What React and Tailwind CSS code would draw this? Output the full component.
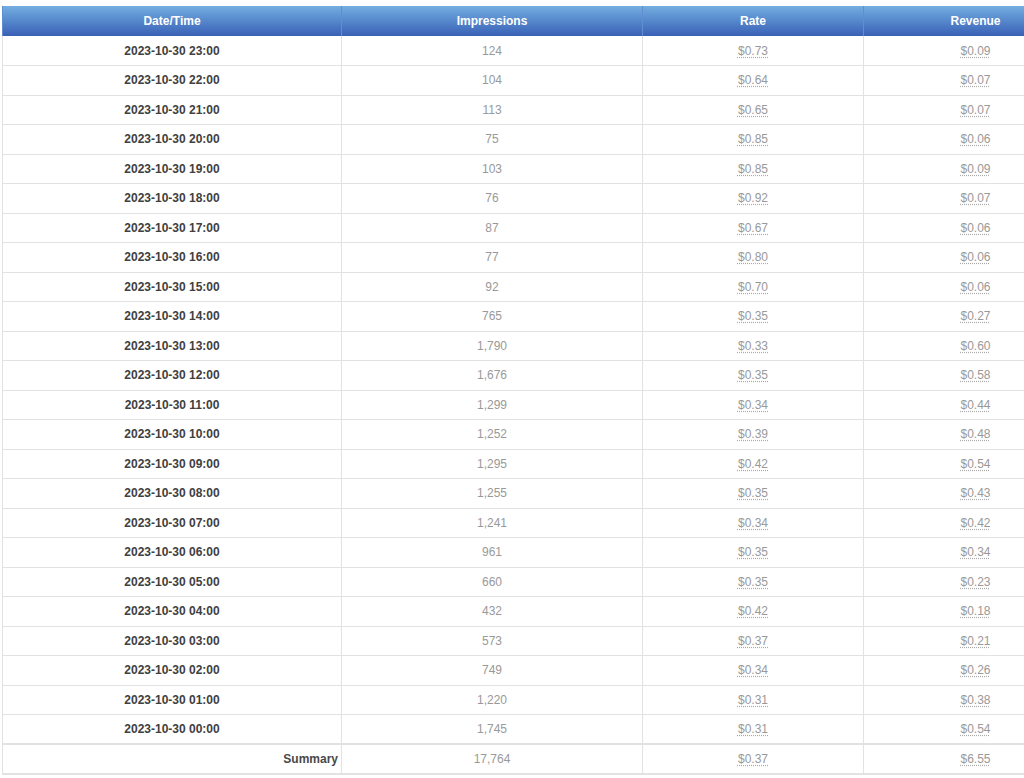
const rows = [
  ['2023-10-30 23:00', '124', '$0.73', '$0.09'],
  ['2023-10-30 22:00', '104', '$0.64', '$0.07'],
  ['2023-10-30 21:00', '113', '$0.65', '$0.07'],
  ['2023-10-30 20:00', '75', '$0.85', '$0.06'],
  ['2023-10-30 19:00', '103', '$0.85', '$0.09'],
  ['2023-10-30 18:00', '76', '$0.92', '$0.07'],
  ['2023-10-30 17:00', '87', '$0.67', '$0.06'],
  ['2023-10-30 16:00', '77', '$0.80', '$0.06'],
  ['2023-10-30 15:00', '92', '$0.70', '$0.06'],
  ['2023-10-30 14:00', '765', '$0.35', '$0.27'],
  ['2023-10-30 13:00', '1,790', '$0.33', '$0.60'],
  ['2023-10-30 12:00', '1,676', '$0.35', '$0.58'],
  ['2023-10-30 11:00', '1,299', '$0.34', '$0.44'],
  ['2023-10-30 10:00', '1,252', '$0.39', '$0.48'],
  ['2023-10-30 09:00', '1,295', '$0.42', '$0.54'],
  ['2023-10-30 08:00', '1,255', '$0.35', '$0.43'],
  ['2023-10-30 07:00', '1,241', '$0.34', '$0.42'],
  ['2023-10-30 06:00', '961', '$0.35', '$0.34'],
  ['2023-10-30 05:00', '660', '$0.35', '$0.23'],
  ['2023-10-30 04:00', '432', '$0.42', '$0.18'],
  ['2023-10-30 03:00', '573', '$0.37', '$0.21'],
  ['2023-10-30 02:00', '749', '$0.34', '$0.26'],
  ['2023-10-30 01:00', '1,220', '$0.31', '$0.38'],
  ['2023-10-30 00:00', '1,745', '$0.31', '$0.54'],
]

function Money({ value }) {
  return (
    <span className="underline decoration-dotted decoration-[#aaa] underline-offset-2">{value}</span>
  )
}

export default function App() {
  return (
    <div className="w-[1024px] h-[778px] overflow-hidden bg-white pt-[6px] pl-[2px] font-['Liberation_Sans',Arial,sans-serif] text-[12px]">
      <table className="w-[1085px] border-collapse table-fixed">
        <colgroup>
          <col className="w-[339px]" />
          <col className="w-[301px]" />
          <col className="w-[221px]" />
          <col className="w-[224px]" />
        </colgroup>
        <thead>
          <tr className="h-[30px] bg-gradient-to-b from-[#74aee0] to-[#3a60b6]">
            {['Date/Time', 'Impressions', 'Rate', 'Revenue'].map((h) => (
              <th key={h} className="border-x border-[#5f8fd0] text-white font-bold text-center align-middle">
                {h}
              </th>
            ))}
          </tr>
        </thead>
        <tbody>
          {rows.map((r) => (
            <tr key={r[0]} className="h-[29.5px] border-b border-[#e2e2e2]">
              <td className="border-x border-[#e2e2e2] text-center font-bold text-[#404040]">{r[0]}</td>
              <td className="border-x border-[#e2e2e2] text-center text-[#999]">{r[1]}</td>
              <td className="border-x border-[#e2e2e2] text-center text-[#999]"><Money value={r[2]} /></td>
              <td className="border-x border-[#e2e2e2] text-center text-[#999]"><Money value={r[3]} /></td>
            </tr>
          ))}
          <tr className="h-[30px] border-t-2 border-b-2 border-[#e2e2e2]">
            <td className="border-x border-[#e2e2e2] text-right pr-[3px] font-bold text-[#484848]">Summary</td>
            <td className="border-x border-[#e2e2e2] text-center text-[#999]">17,764</td>
            <td className="border-x border-[#e2e2e2] text-center text-[#999]"><Money value="$0.37" /></td>
            <td className="border-x border-[#e2e2e2] text-center text-[#999]"><Money value="$6.55" /></td>
          </tr>
        </tbody>
      </table>
    </div>
  )
}
